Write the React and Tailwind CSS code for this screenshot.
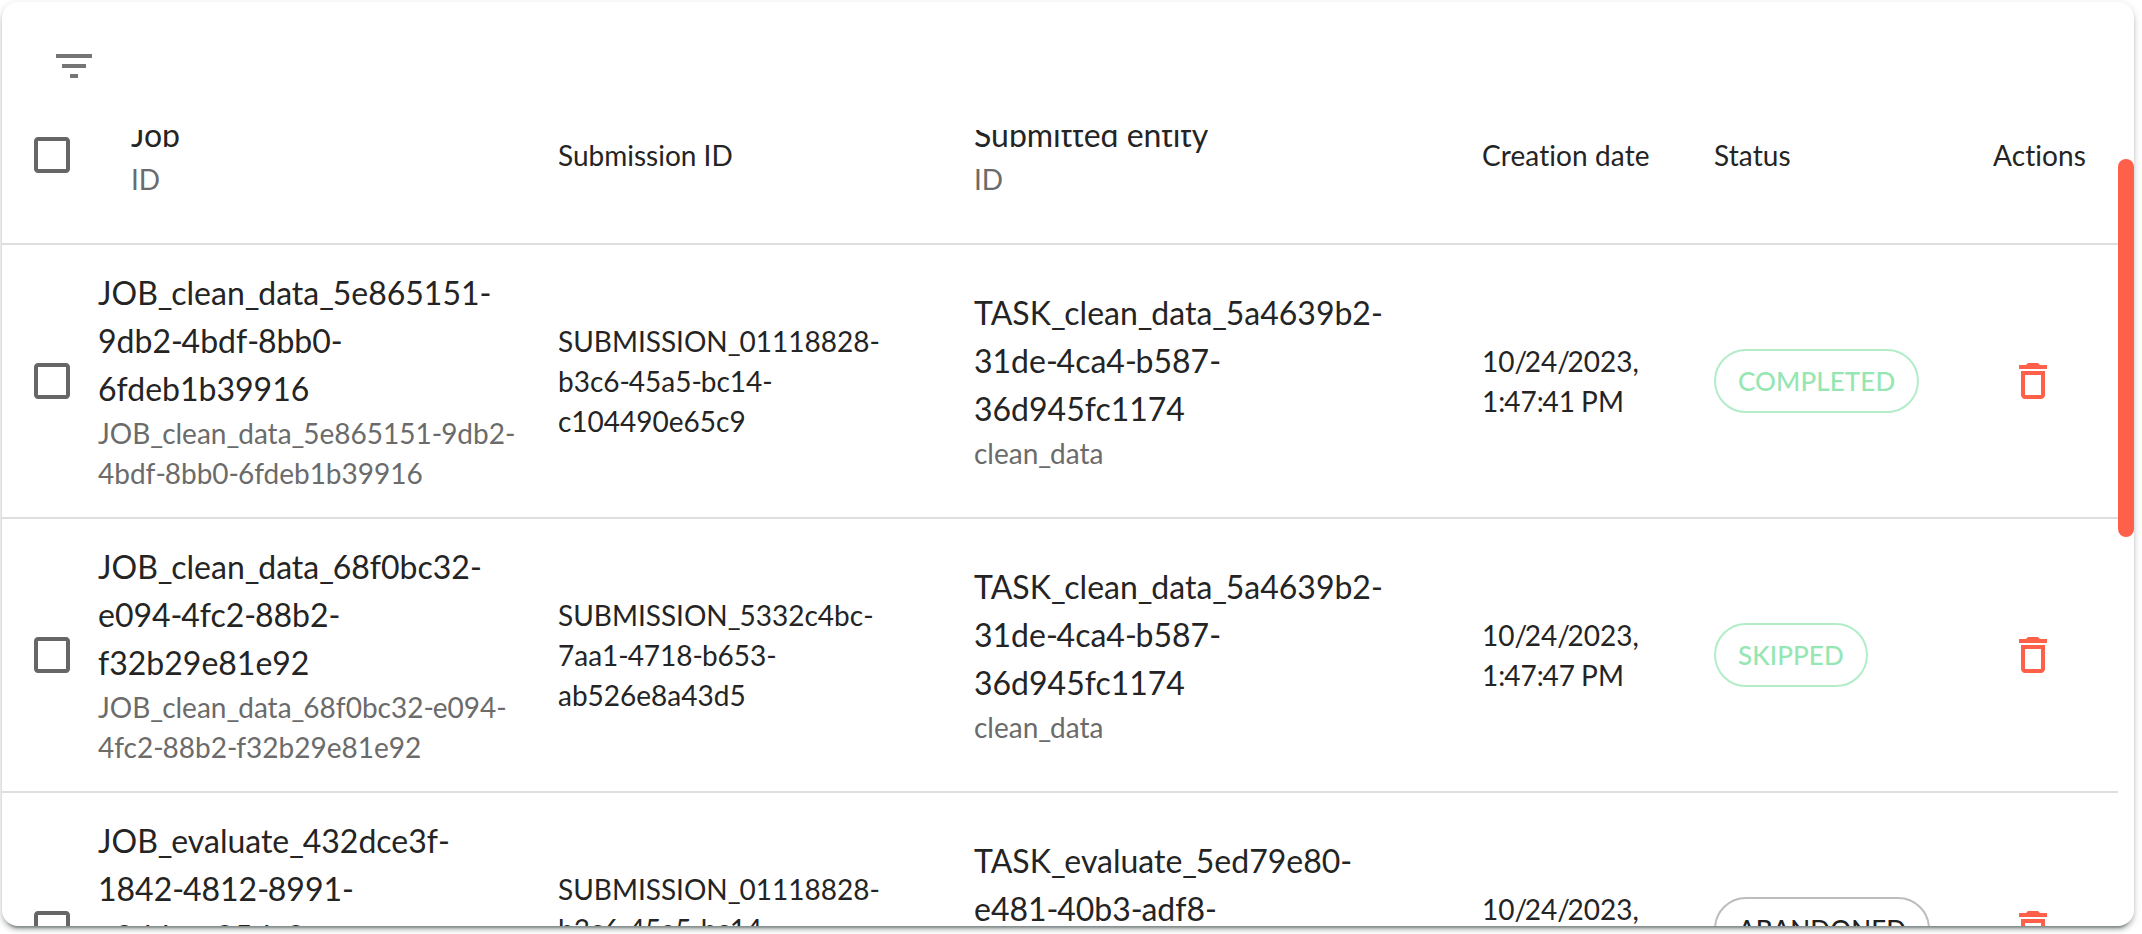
import { MdCheckBoxOutlineBlank, MdDeleteOutline, MdFilterList } from "react-icons/md";

const jobs = [
  {
    name: "JOB_clean_data_5e865151-9db2-4bdf-8bb0-6fdeb1b39916",
    submission: "SUBMISSION_01118828-b3c6-45a5-bc14-c104490e65c9",
    entity: "TASK_clean_data_5a4639b2-31de-4ca4-b587-36d945fc1174",
    entityId: "clean_data",
    day: "10/24/2023,",
    time: "1:47:41 PM",
    status: "COMPLETED",
  },
  {
    name: "JOB_clean_data_68f0bc32-e094-4fc2-88b2-f32b29e81e92",
    submission: "SUBMISSION_5332c4bc-7aa1-4718-b653-ab526e8a43d5",
    entity: "TASK_clean_data_5a4639b2-31de-4ca4-b587-36d945fc1174",
    entityId: "clean_data",
    day: "10/24/2023,",
    time: "1:47:47 PM",
    status: "SKIPPED",
  },
  {
    name: "JOB_evaluate_432dce3f-1842-4812-8991-e8ddcca85da8",
    submission: "SUBMISSION_01118828-b3c6-45a5-bc14-c104490e65c9",
    entity: "TASK_evaluate_5ed79e80-e481-40b3-adf8-2b2e9ab16d3f",
    entityId: "evaluate",
    day: "10/24/2023,",
    time: "1:47:41 PM",
    status: "ABANDONED",
  },
];

const grid =
  "grid grid-cols-[96px_460px_416px_508px_232px_279px_1fr] items-center border-b-2 border-[#dedede]";

// Punctuation in identifiers and timestamps is set a little tighter than letters and digits.
const tight = {
  _: "tracking-[-0.039em]",
  "-": "tracking-[-0.039em]",
  "/": "tracking-[-0.085em]",
  ":": "tracking-[-0.04em]",
  " ": "tracking-[-0.04em]",
};

function Code({ children }) {
  return children.split(/([_\-/: ])/).map((part, i) =>
    tight[part] ? (
      <span key={i} className={tight[part]}>
        {part}
      </span>
    ) : (
      part
    ),
  );
}

function Checkbox() {
  return (
    <div className="pl-[26px] text-[#666666]">
      <MdCheckBoxOutlineBlank className="size-12" />
    </div>
  );
}

function TwoLine({ primary, secondary, className }) {
  return (
    <div className={className}>
      <div className="text-[32px] leading-[48px]">{primary}</div>
      <div className="text-[28px] leading-[40px] text-[#6b6b6b]">{secondary}</div>
    </div>
  );
}

function Chip({ status }) {
  const tone =
    status === "ABANDONED" ? "border-[#bdbdbd] text-[#212121]" : "border-[#b2edc8] text-[#96e6b3]";
  return (
    <span
      className={`inline-flex h-16 items-center rounded-full border-2 px-[22px] text-[26px] font-medium tracking-[0.1px] ${tone}`}
    >
      {status}
    </span>
  );
}

function JobRow({ job }) {
  return (
    <div className={`${grid} h-[274px] shrink-0`}>
      <Checkbox />
      <TwoLine
        className="pr-9"
        primary={<Code>{job.name}</Code>}
        secondary={<Code>{job.name}</Code>}
      />
      <div className="pr-16 leading-[40px]">
        <Code>{job.submission}</Code>
      </div>
      <TwoLine
        className="pr-20"
        primary={<Code>{job.entity}</Code>}
        secondary={<Code>{job.entityId}</Code>}
      />
      <div className="leading-[40px]">
        <Code>{job.day}</Code>
        <br />
        <Code>{job.time}</Code>
      </div>
      <div className="flex">
        <Chip status={job.status} />
      </div>
      <div className="pl-4 text-[#ff6049]">
        <MdDeleteOutline className="size-12" />
      </div>
    </div>
  );
}

export default function App() {
  return (
    <div className="h-[934px] w-[2142px] overflow-hidden bg-white pt-0.5 pl-0.5 font-['Lato',sans-serif] text-[28px] text-[#242424] [font-variant-ligatures:none]">
      <div className="h-[924px] w-[2132px] rounded-2xl bg-white shadow-[0_6px_2px_-4px_rgba(0,20,20,0.3),0_4px_4px_0_rgba(0,20,20,0.2),0_2px_10px_0_rgba(0,20,20,0.12)]">
        <div className="flex h-full flex-col overflow-hidden rounded-2xl">
          <div className="h-32 shrink-0 pt-10 pl-12 text-[#757575]">
            <MdFilterList className="size-12" />
          </div>
          <div className="flex min-h-0 flex-1">
            <div className="flex w-[2116px] flex-col overflow-hidden">
              <div className="flex h-[115px] shrink-0 flex-col justify-end overflow-hidden">
                <div className={`${grid} h-[178px] shrink-0`}>
                  <Checkbox />
                  <TwoLine className="pl-[33px]" primary="Job" secondary="ID" />
                  <div>Submission ID</div>
                  <TwoLine primary="Submitted entity" secondary="ID" />
                  <div className="tracking-[0.1px]">Creation date</div>
                  <div className="tracking-[0.1px]">Status</div>
                  <div className="tracking-[0.1px]">Actions</div>
                </div>
              </div>
              {jobs.map((job) => (
                <JobRow key={job.name} job={job} />
              ))}
            </div>
            <div className="w-4 pt-[29px]">
              <div className="h-[378px] rounded-full bg-[#ff6049]" />
            </div>
          </div>
        </div>
      </div>
    </div>
  );
}
